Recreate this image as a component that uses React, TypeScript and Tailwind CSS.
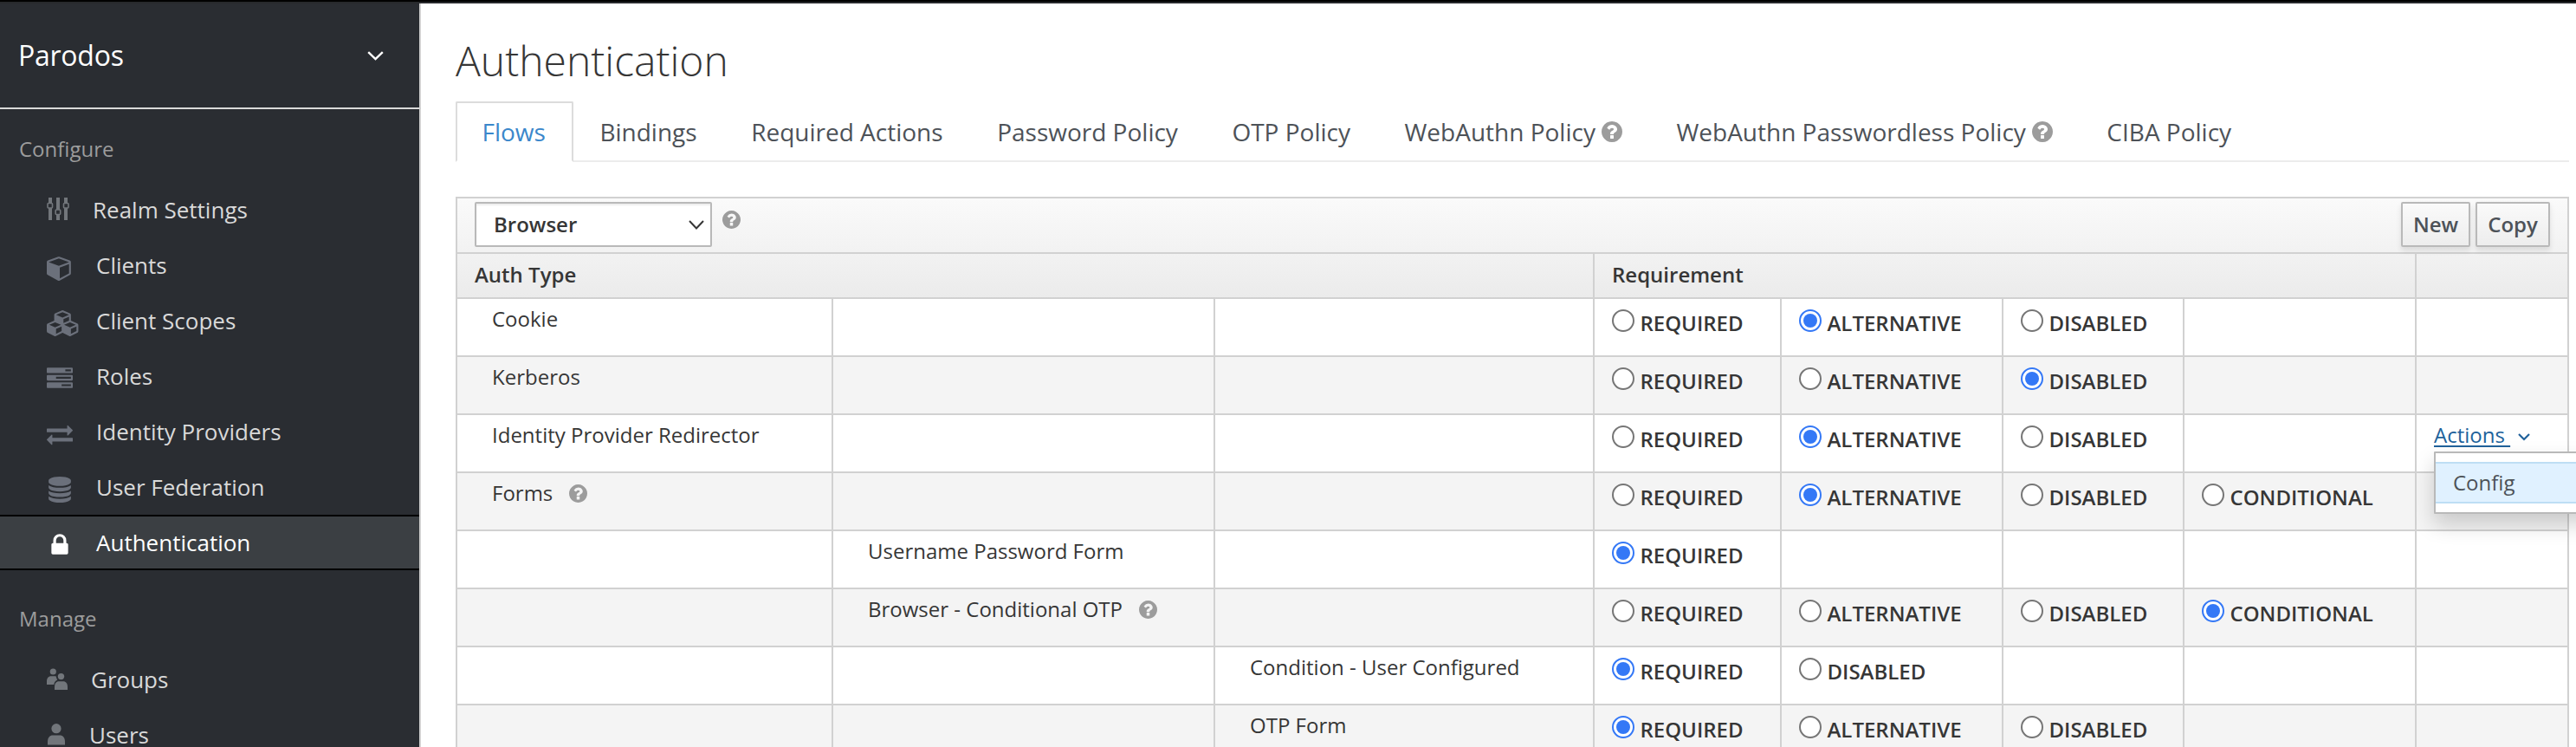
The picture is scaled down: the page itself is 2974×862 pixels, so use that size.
import type { ReactNode } from "react";

const PATHS = {
  cube: "M896 1629l640-349v-636l-640 233v752zm-64-865l698-254-698-254-698 254zm832-252v768q0 35-18 65t-49 47l-704 384q-28 16-61 16t-61-16l-704-384q-31-17-49-47t-18-65v-768q0-40 23-73t61-47l704-256q22-8 44-8t44 8l704 256q38 14 61 47t23 73z",
  cubes:
    "M640 1632l384-192v-314l-384 164v342zm-64-454l404-173-404-173-404 173zm1088 454l384-192v-314l-384 164v342zm-64-454l404-173-404-173-404 173zm-448-293l384-165v-266l-384 164v267zm-64-379l441-189-441-189-441 189zm1088 518v416q0 36-19 67t-52 47l-448 224q-25 14-57 14t-57-14l-448-224q-5-2-7-4-2 2-7 4l-448 224q-25 14-57 14t-57-14l-448-224q-33-16-52-47t-19-67v-416q0-38 21.5-70t56.500-48l434-186v-400q0-38 21.500-70t56.500-48l448-192q23-10 50-10t50 10l448 192q35 16 56.500 48t21.500 70v400l434 186q36 16 57 48t21 70z",
  tasks:
    "M1024 1408h640v-128h-640v128zm-384-512h1024v-128h-1024v128zm640-512h384v-128h-384v128zm512 832v256q0 26-19 45t-45 19h-1664q-26 0-45-19t-19-45v-256q0-26 19-45t45-19h1664q26 0 45 19t19 45zm0-512v256q0 26-19 45t-45 19h-1664q-26 0-45-19t-19-45v-256q0-26 19-45t45-19h1664q26 0 45 19t19 45zm0-512v256q0 26-19 45t-45 19h-1664q-26 0-45-19t-19-45v-256q0-26 19-45t45-19h1664q26 0 45 19t19 45z",
  exchange:
    "M1792 1184v192q0 13-9.500 22.500t-22.500 9.500h-1376v192q0 13-9.500 22.500t-22.500 9.500q-12 0-24-10l-319-320q-9-9-9-22 0-14 9-23l320-320q9-9 23-9 13 0 22.500 9.500t9.500 22.500v192h1376q13 0 22.500 9.500t9.500 22.500zm0-544q0 14-9 23l-320 320q-9 9-23 9-13 0-22.500-9.500t-9.500-22.500v-192h-1376q-13 0-22.500-9.500t-9.500-22.500v-192q0-13 9.500-22.500t22.500-9.500h1376v-192q0-14 9-23t23-9q12 0 24 10l319 319q9 9 9 23z",
  database:
    "M896 768q237 0 443-43t325-127v170q0 69-103 128t-280 93.500-385 34.500-385-34.500-280-93.500-103-128v-170q119 84 325 127t443 43zm0 768q237 0 443-43t325-127v170q0 69-103 128t-280 93.500-385 34.500-385-34.500-280-93.500-103-128v-170q119 84 325 127t443 43zm0-384q237 0 443-43t325-127v170q0 69-103 128t-280 93.500-385 34.500-385-34.500-280-93.500-103-128v-170q119 84 325 127t443 43zm0-1152q208 0 385 34.500t280 93.500 103 128v128q0 69-103 128t-280 93.500-385 34.500-385-34.500-280-93.500-103-128v-128q0-69 103-128t280-93.500 385-34.500z",
  lock: "M640 768h512v-192q0-106-75-181t-181-75-181 75-75 181v192zm832 96v576q0 40-28 68t-68 28h-960q-40 0-68-28t-28-68v-576q0-40 28-68t68-28h32v-192q0-184 132-316t316-132 316 132 132 316v192h32q40 0 68 28t28 68z",
  help: "M1024 1376v-192q0-14-9-23t-23-9h-192q-14 0-23 9t-9 23v192q0 14 9 23t23 9h192q14 0 23-9t9-23zm256-672q0-88-55.500-163t-138.500-116-170-41q-243 0-371 213-15 24 8 42l132 100q7 6 19 6 16 0 25-12 53-68 86-92 34-24 86-24 48 0 85.500 26t37.500 59q0 38-20 61t-68 45q-63 28-115.500 86.500t-52.500 125.500v36q0 14 9 23t23 9h192q14 0 23-9t9-23q0-19 21.500-49.500t54.500-49.500q32-18 49-28.500t46-35 44.500-48 28-60.500 12.500-81zm384 192q0 209-103 385.500t-279.500 279.500-385.500 103-385.500-103-279.500-279.500-103-385.500 103-385.500 279.500-279.500 385.500-103 385.500 103 279.500 279.500 103 385.500z",
};

function Glyph({ name }: { name: keyof typeof PATHS }) {
  return (
    <svg className="mt-5 size-[30px] overflow-visible" viewBox="0 0 1792 1792" fill="currentColor">
      <path d={PATHS[name]} />
    </svg>
  );
}

function Help({ className }: { className: string }) {
  return (
    <svg className={"shrink-0 text-[#9c9c9c] " + className} viewBox="128 128 1536 1536" fill="currentColor">
      <path d={PATHS.help} />
    </svg>
  );
}

function Sliders() {
  return (
    <svg className="mt-[18px] size-[26px] text-[#72767b]" viewBox="0 0 26 26" fill="none" stroke="currentColor">
      <path strokeWidth="4" d="M4 0V6M4 12V26M13 0V14M13 20V26M22 0V6M22 12V26" />
      <rect x="1" y="6.500" width="5.500" height="5.500" rx="1" strokeWidth="1.600" />
      <rect x="10.200" y="14" width="5.500" height="5.500" rx="1" strokeWidth="1.600" />
      <rect x="19.500" y="6.500" width="5.500" height="5.500" rx="1" strokeWidth="1.600" />
    </svg>
  );
}

function GroupGlyph() {
  return (
    <svg className="mt-[19px] h-[25px] w-[24px] text-[#72767b]" viewBox="0 0 24 25" fill="currentColor">
      <circle cx="7.300" cy="4" r="3.600" />
      <circle cx="16.500" cy="9.600" r="3.700" />
      <path d="M0 19V15.500C0 11.500 2 9.300 5 9.300H10.500C11 10.500 11.200 12 12.200 13.500C9.800 14.500 8.600 16.500 8.300 19Z" />
      <path d="M9 25V22C9 17.500 11 15.300 14 15.300H19C22 15.300 24 17.500 24 22V25Z" />
    </svg>
  );
}

function UserGlyph() {
  return (
    <svg className="mt-[19px] ml-px h-[25px] w-[20px] text-[#72767b]" viewBox="0 0 20 25" fill="currentColor">
      <circle cx="10" cy="5.700" r="5.600" />
      <path d="M0 24.500V21C0 16 2.500 13.500 6 13.500H14C17.500 13.500 20 16 20 21V24.500Z" />
    </svg>
  );
}

function NavItem({ icon, label, slot, active }: { icon: ReactNode; label: string; slot: string; active?: boolean }) {
  return (
    <a
      className={
        "flex h-16 items-start pl-[54px] text-[26px] " +
        (active ? "border-y-2 border-black bg-[#3b3f43] text-white" : "text-[#d9d9d9]")
      }
    >
      <span className={slot + (active ? " -mt-0.5 text-white" : " text-[#6b707b]")}>{icon}</span>
      <span className={active ? "-mt-0.5 leading-16" : "leading-16"}>{label}</span>
    </a>
  );
}

function Sidebar() {
  return (
    <nav className="h-[858px] w-[486px] shrink-0 overflow-hidden border-r-2 border-[#d1d1d1] bg-[#2a2d32]">
      <div className="flex h-[122px] items-center justify-between border-b-2 border-[#d9d9d9] pr-[41px] pl-[21px] text-[32px] text-white">
        <span className="tracking-[-0.25px]">Parodos</span>
        <svg className="h-[11px] w-[19px]" viewBox="0 0 19 11" fill="none" stroke="currentColor" strokeWidth="2.400">
          <path d="M1.200 1.200L9.500 9.200L17.800 1.200" />
        </svg>
      </div>
      <h2 className="flex h-21 items-center pt-[8px] pl-[22px] text-[24px] text-[#9c9c9c]">Configure</h2>
      <NavItem icon={<Sliders />} label="Realm Settings" slot="w-[53px]" />
      <NavItem icon={<Glyph name="cube" />} label="Clients" slot="w-[57px]" />
      <NavItem icon={<Glyph name="cubes" />} label="Client Scopes" slot="w-[57px]" />
      <NavItem icon={<Glyph name="tasks" />} label="Roles" slot="w-[57px]" />
      <NavItem icon={<Glyph name="exchange" />} label="Identity Providers" slot="w-[57px]" />
      <NavItem icon={<Glyph name="database" />} label="User Federation" slot="w-[57px]" />
      <NavItem icon={<Glyph name="lock" />} label="Authentication" slot="w-[57px]" active />
      <h2 className="flex h-[94px] items-center pt-[18px] pl-[22px] text-[24px] text-[#9c9c9c]">Manage</h2>
      <NavItem icon={<GroupGlyph />} label="Groups" slot="w-[51px]" />
      <NavItem icon={<UserGlyph />} label="Users" slot="w-[49px]" />
    </nav>
  );
}

const TABS: { label: string; help?: boolean; active?: boolean }[] = [
  { label: "Flows", active: true },
  { label: "Bindings" },
  { label: "Required Actions" },
  { label: "Password Policy" },
  { label: "OTP Policy" },
  { label: "WebAuthn Policy", help: true },
  { label: "WebAuthn Passwordless Policy", help: true },
  { label: "CIBA Policy" },
];

function Tabs() {
  return (
    <div className="flex h-[70px] border-b-2 border-[#ececec]">
      {TABS.map((t) => (
        <a
          key={t.label}
          className={
            "flex h-[70px] items-center border-2 pr-[30px] pl-[28.5px] text-[28px] whitespace-nowrap " +
            (t.active
              ? "rounded-t-[2px] border-[#dcdcdc] border-b-white bg-white text-[#3a87cb]"
              : "border-transparent text-[#4d5258]")
          }
        >
          {t.label}
          {t.help && <Help className="ml-[7px] size-6" />}
        </a>
      ))}
    </div>
  );
}

type Option = "REQUIRED" | "ALTERNATIVE" | "DISABLED" | "CONDITIONAL";
type Row = { name: string; level: number; options: Option[]; value: Option; help?: boolean; actions?: boolean };

const ROWS: Row[] = [
  { name: "Cookie", level: 0, options: ["REQUIRED", "ALTERNATIVE", "DISABLED"], value: "ALTERNATIVE" },
  { name: "Kerberos", level: 0, options: ["REQUIRED", "ALTERNATIVE", "DISABLED"], value: "DISABLED" },
  {
    name: "Identity Provider Redirector",
    level: 0,
    options: ["REQUIRED", "ALTERNATIVE", "DISABLED"],
    value: "ALTERNATIVE",
    actions: true,
  },
  {
    name: "Forms",
    level: 0,
    options: ["REQUIRED", "ALTERNATIVE", "DISABLED", "CONDITIONAL"],
    value: "ALTERNATIVE",
    help: true,
  },
  { name: "Username Password Form", level: 1, options: ["REQUIRED"], value: "REQUIRED" },
  {
    name: "Browser - Conditional OTP",
    level: 1,
    options: ["REQUIRED", "ALTERNATIVE", "DISABLED", "CONDITIONAL"],
    value: "CONDITIONAL",
    help: true,
  },
  { name: "Condition - User Configured", level: 2, options: ["REQUIRED", "DISABLED"], value: "REQUIRED" },
  { name: "OTP Form", level: 2, options: ["REQUIRED", "ALTERNATIVE", "DISABLED"], value: "REQUIRED" },
];

function Radio({ label, checked }: { label: string; checked: boolean }) {
  return (
    <label className="flex pl-5">
      <span
        className={
          "mt-3 flex size-[26px] shrink-0 items-center justify-center rounded-full border-2 bg-white " +
          (checked ? "border-[#3478f6]" : "border-[#767676]")
        }
      >
        {checked && <span className="size-4 rounded-full bg-[#3478f6]" />}
      </span>
      <span className="mt-[8px] ml-[6.5px] text-[24px] leading-10 font-semibold">{label}</span>
    </label>
  );
}

function ActionsMenu() {
  return (
    <div className="relative pt-[3px] pl-5">
      <a className="flex items-center text-[24px] leading-10 text-[#21629b]">
        <span className="whitespace-pre underline decoration-2 underline-offset-[3px]">{"Actions "}</span>
        <svg className="mt-[5px] ml-[9px] h-[9px] w-[14px]" viewBox="0 0 14 9" fill="none" stroke="currentColor" strokeWidth="2.200">
          <path d="M1 1L7 7L13 1" />
        </svg>
      </a>
      <div className="absolute top-[42px] left-5 z-10 h-[72px] w-[320px] rounded-[1px] border-2 border-[#b9b9b9] bg-white py-[10px] text-[24px] text-[#4d5258] shadow-[0_12px_24px_rgba(0,0,0,0.175)]">
        <div className="flex h-12 items-center border-y-2 border-[#bedef4] bg-[#e0f1ff] pb-px pl-5">Config</div>
      </div>
    </div>
  );
}

const BUTTON =
  "flex h-[52px] items-center rounded-[2px] border-2 border-[#b9b9b9] bg-linear-to-b from-[#fafafa] to-[#ededed] text-[24px] font-semibold text-[#4d5258] shadow-[0_4px_6px_rgba(3,3,3,0.1)]";

function FlowTable() {
  return (
    <section className="border-2 border-b-0 border-[#d1d1d1] text-[24px]">
      <header className="bg-linear-to-b from-[#fafafa] to-[#ebebeb]">
        <div className="flex h-16 items-start border-b-2 border-[#d1d1d1] pt-1 pr-[20px] pl-[20px]">
          <div className="flex h-[52px] w-[274px] items-center justify-between rounded-[2px] border-2 border-[#b9b9b9] bg-white pr-[7px] pl-5 font-semibold shadow-[inset_0_2px_2px_rgba(3,3,3,0.075)]">
            <span>Browser</span>
            <svg className="h-[11px] w-[18px]" viewBox="0 0 18 11" fill="none" stroke="currentColor" strokeWidth="2">
              <path d="M1 1L9 9.500L17 1" />
            </svg>
          </div>
          <Help className="mt-[10px] ml-[12px] size-[21px]" />
          <div className="ml-auto flex gap-[6px]">
            <button className={BUTTON + " w-20 justify-center"}>New</button>
            <button className={BUTTON + " w-[86px] justify-center"}>Copy</button>
          </div>
        </div>
        <div className="grid h-[52px] grid-cols-[1313px_949px_174px] border-b-2 border-[#d1d1d1] leading-[47px] font-semibold">
          <div className="border-r-2 border-[#d1d1d1] pl-5">Auth Type</div>
          <div className="border-r-2 border-[#d1d1d1] pl-5">Requirement</div>
          <div />
        </div>
      </header>
      {ROWS.map((row, i) => (
        <div
          key={row.name}
          className={
            "grid h-[67px] grid-cols-[434px_441px_438px_216px_256px_209px_268px_174px] border-b-2 border-[#d1d1d1] " +
            (i % 2 ? "bg-[#f4f4f4]" : "bg-white")
          }
        >
          {[0, 1, 2].map((level) => (
            <div key={level} className="flex border-r-2 border-[#d1d1d1] pt-[3px] pl-10 leading-10 whitespace-nowrap">
              {row.level === level && (
                <>
                  <span>{row.name}</span>
                  {row.help && <Help className="mt-[10px] ml-[19px] size-[21px]" />}
                </>
              )}
            </div>
          ))}
          {[0, 1, 2, 3].map((n) => (
            <div key={n} className="border-r-2 border-[#d1d1d1]">
              {row.options[n] && <Radio label={row.options[n]} checked={row.options[n] === row.value} />}
            </div>
          ))}
          <div>{row.actions && <ActionsMenu />}</div>
        </div>
      ))}
    </section>
  );
}

export default function App() {
  return (
    <div className="h-[862px] w-[2974px] overflow-hidden bg-white font-['Open_Sans',sans-serif] text-[#363636]">
      <div className="h-1 border-t-2 border-black bg-[#27292c]" />
      <div className="flex">
        <Sidebar />
        <main className="h-[858px] w-[2488px] overflow-hidden pr-[8px] pl-10">
          <h1 className="flex h-[113px] items-center pt-[18px] text-[48px] leading-[64px] font-light">Authentication</h1>
          <Tabs />
          <div className="pt-10">
            <FlowTable />
          </div>
        </main>
      </div>
    </div>
  );
}
